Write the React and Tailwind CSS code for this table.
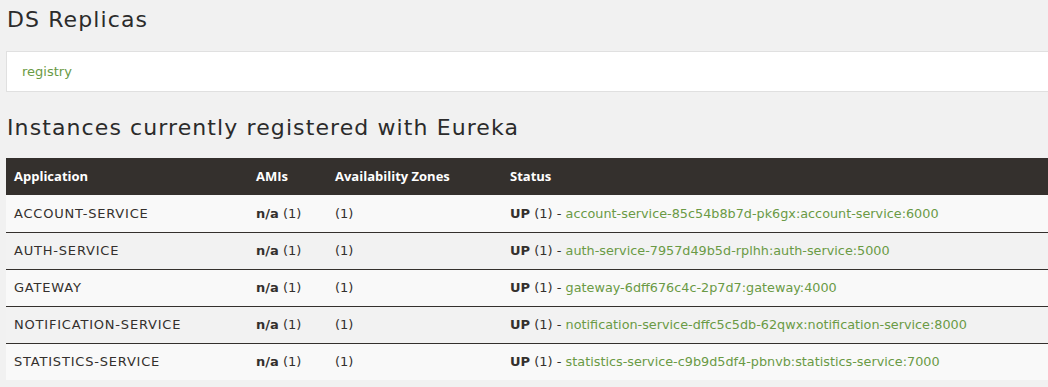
import React from "react";

const rows = [
  ["ACCOUNT-SERVICE", "account-service-85c54b8b7d-pk6gx:account-service:6000"],
  ["AUTH-SERVICE", "auth-service-7957d49b5d-rplhh:auth-service:5000"],
  ["GATEWAY", "gateway-6dff676c4c-2p7d7:gateway:4000"],
  ["NOTIFICATION-SERVICE", "notification-service-dffc5c5db-62qwx:notification-service:8000"],
  ["STATISTICS-SERVICE", "statistics-service-c9b9d5df4-pbnvb:statistics-service:7000"],
];

export default function App() {
  return (
    <div className="min-h-screen bg-[#f1f1f1] overflow-hidden text-[#34302d] font-['DejaVu_Sans',sans-serif]">
      <div className="w-[1070px] pl-[6px]">
        {/* DS Replicas */}
        <h2 className="text-[22px] leading-[28px] tracking-[1.1px] pt-[6px] pl-px text-[#2b2b2b]">
          DS Replicas
        </h2>
        <div className="mt-[17px] h-[41px] bg-white border border-[#e0e0e0] flex items-center pl-[15px]">
          <a className="text-[13px] text-[#6a9a45]">registry</a>
        </div>

        {/* Instances */}
        <h2 className="text-[22px] leading-[28px] tracking-[1.1px] mt-[22px] pl-px text-[#2b2b2b]">
          Instances currently registered with Eureka
        </h2>
        <table className="mt-[16px] w-full table-fixed border-collapse text-[13px]">
          <thead>
            <tr className="bg-[#34302d] text-white h-[37px] text-left font-['Open_Sans',sans-serif]">
              <th className="pl-[8px] w-[250px] font-bold">Application</th>
              <th className="w-[79px] font-bold">AMIs</th>
              <th className="w-[175px] font-bold">Availability Zones</th>
              <th className="font-bold">Status</th>
            </tr>
          </thead>
          <tbody>
            {rows.map(([app, inst], i) => (
              <tr
                key={app}
                className={`h-[37px] border-t border-[#34302d] first:border-t-0 ${
                  i % 2 === 0 ? "bg-[#f9f9f9]" : "bg-[#f2f2f2]"
                }`}
              >
                <td className="pl-[8px] tracking-[0.8px]">{app}</td>
                <td>
                  <b>n/a</b> (1)
                </td>
                <td>(1)</td>
                <td>
                  <b>UP</b> (1) -{" "}
                  <a className="text-[12.8px] text-[#6a9a45]">{inst}</a>
                </td>
              </tr>
            ))}
          </tbody>
        </table>
      </div>
    </div>
  );
}
